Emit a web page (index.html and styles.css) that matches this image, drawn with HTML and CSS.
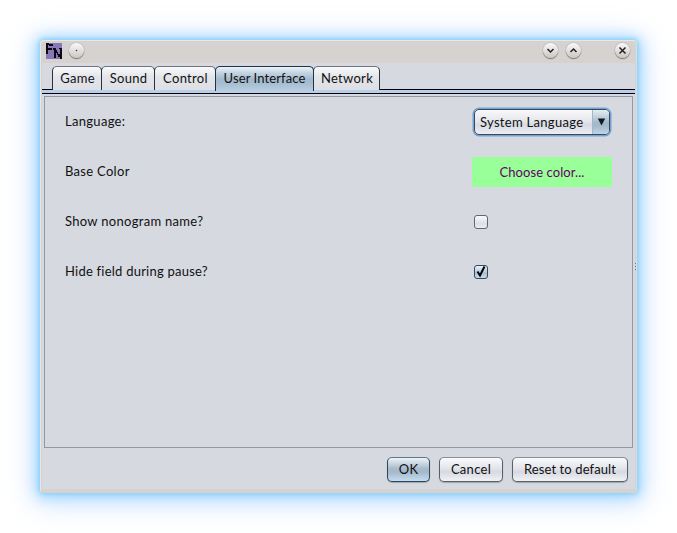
FILE: index.html
```html
<!DOCTYPE html>
<html lang="en">
<head>
<meta charset="utf-8">
<title>Settings</title>
<link rel="stylesheet" href="styles.css">
</head>
<body>
<div class="window">
  <header class="titlebar">
    <svg class="app-icon" width="16" height="16" viewBox="0 0 16 16" shape-rendering="crispEdges">
      <rect width="16" height="16" fill="#8878b8"/>
      <path fill="#0c0814" d="M0 0h2v11H0zM2 0h1v2h-1zM3 1h4v2H3zM2 5h4v2H2zM7 5h3v2H7zM8 7h2v8H8zM10 7h1v3h-1zM11 9h1v3h-1zM12 11h2v3h-2zM13 5h3v1h-3zM14 6h2v10h-2z"/>
    </svg>
    <span class="round sticky"><svg width="15" height="15" viewBox="0 0 15 15"><circle cx="7.5" cy="7.5" r=".8" fill="#333"/></svg></span>
    <span class="round"><svg width="15" height="15" viewBox="0 0 15 15"><path d="M4.5 6l3 3 3-3"/></svg></span>
    <span class="round"><svg width="15" height="15" viewBox="0 0 15 15"><path d="M4.5 9l3-3 3 3"/></svg></span>
    <span class="round close"><svg width="15" height="15" viewBox="0 0 15 15"><path d="M4.5 4.5l6 6M10.5 4.5l-6 6"/></svg></span>
  </header>
  <main class="client">
    <nav class="tabs">
      <span class="tab game">Game</span><span class="tab sound">Sound</span><span class="tab control">Control</span><span class="tab ui active">User Interface</span><span class="tab network">Network</span>
    </nav>
    <div class="tabline"></div>
    <section class="panel">
      <div class="row"><span class="label">Language:</span>
        <span class="combo"><span class="value">System Language</span><span class="arrow"><svg width="9" height="8" viewBox="0 0 9 8"><path d="M.8.5h7.4l-3.7 7z" fill="#15181c"/></svg></span></span></div>
      <div class="row"><span class="label">Base Color</span><span class="color">Choose color...</span></div>
      <div class="row"><span class="label">Show nonogram name?</span><span class="check"></span></div>
      <div class="row"><span class="label long">Hide field during pause?</span><span class="check on"><svg width="14" height="14" viewBox="0 0 14 14"><path d="M3.5 6.5l2.5 4 4.5-9" fill="none" stroke="#000" stroke-width="2"/></svg></span></div>
    </section>
    <footer class="buttons"><span class="btn ok">OK</span><span class="btn cancel">Cancel</span><span class="btn reset">Reset to default</span></footer>
    <span class="grip"><i></i><i></i><i></i></span>
  </main>
</div>
</body>
</html>
```
FILE: styles.css
```css
* { box-sizing: border-box; }
body {
  margin: 0;
  padding: 40px;
  background: #fff;
  font: 13px/18px Lato, "Open Sans", sans-serif;
  letter-spacing: .3px;
  color: #111;
  white-space: nowrap;
}
.window {
  width: 597px;
  height: 453px;
  padding: 0 2px 4px;
  background: #d6d2cf;
  border-radius: 4px;
  box-shadow: inset 1px 1px 0 #e9e7e5, inset -1px 0 0 #dedbd8, 0 0 4px 1px #84d0fa, 0 1px 13px 4px rgba(120, 200, 255, .6), 0 4px 28px 7px rgba(130, 185, 255, .36);
}
.titlebar {
  height: 23px;
  display: flex;
  align-items: flex-start;
  padding: 3px 5px 0 4px;
}
.app-icon { display: block; }
.round {
  width: 15px;
  height: 15px;
  margin-right: 8px;
  border-radius: 50%;
  background: linear-gradient(#fbfaf9, #c9c6c3);
  box-shadow: 0 1px 1px #77736f, 0 0 1px #77736f;
}
.round svg { display: block; fill: none; stroke: #222; stroke-width: 1.5; }
.round circle { stroke: none; }
.sticky { margin-left: 7px; margin-right: auto; }
.close { margin: 0 0 0 26px; }
.client {
  position: relative;
  height: 426px;
  background: #d6d9e0;
}
.tabs { height: 26px; display: flex; padding: 3px 0 0 10px; }
.tab {
  height: 24px;
  margin-right: -1px;
  padding: 2px 0 0 1px;
  text-align: center;
  border: 1px solid #2c3038;
  border-top-color: #70747c;
  border-bottom: 0;
  border-radius: 5px 5px 0 0;
  background: linear-gradient(#fafafb, #e4e6ea 40%, #dcdfe5);
}
.game { width: 50px; }
.sound { width: 54px; }
.control { width: 62px; }
.ui { width: 99px; padding-left: 0; letter-spacing: .1px; }
.network { width: 67px; }
.active {
  position: relative;
  height: 25px;
  border-color: #1c3348;
  background: linear-gradient(#eef4f9, #c3d3e0 25%, #a4bacd 50%, #a5bbce 65%, #b8cfe3);
}
.tabline {
  height: 5px;
  border: solid #000010;
  border-width: 1px 0;
  background: #b8cfe5;
}
.panel {
  width: 589px;
  height: 352px;
  margin: 2px 0 0 2px;
  border: 1px solid #9297a1;
  padding-left: 20px;
}
.row { height: 50px; display: flex; align-items: center; }
.label { width: 409px; padding-bottom: 2px; }
.long { letter-spacing: .23px; }
.combo {
  display: flex;
  width: 136px;
  height: 26px;
  border: 1px solid #38495d;
  border-radius: 5px;
  background: linear-gradient(#f9f9fb, #e3e5ea 50%, #d7dae1 60%, #eceef2);
  box-shadow: 0 0 0 1.5px #73a4d1;
}
.value { flex: 1; padding: 3px 0 0 5px; }
.arrow {
  width: 17px;
  display: flex;
  align-items: center;
  justify-content: center;
  border-left: 1px solid #a3b7c9;
  border-radius: 0 4px 4px 0;
  background: linear-gradient(#e5edf4, #a5bbcd 50%, #a3b8ca 65%, #bfd4e7);
}
.color {
  width: 140px;
  height: 30px;
  margin-left: -2px;
  line-height: 30px;
  text-align: center;
  letter-spacing: .08px;
  background: #99ff99;
  color: #660066;
}
.check {
  width: 14px;
  height: 14px;
  border: 1px solid #62666f;
  border-radius: 3px;
  background: linear-gradient(#fafafb, #dcdfe5 65%, #eceef2);
}
.on { border-color: #2f4a62; background: linear-gradient(#eef4f9, #abc0d1 60%, #c5daec); }
.check svg { display: block; margin: -1px; }
.buttons { display: flex; justify-content: flex-end; gap: 9px; padding: 9px 7px 0 0; }
.btn {
  height: 25px;
  padding-top: 2px;
  text-align: center;
  border: 1px solid #5b5f68;
  border-top-color: #8b8f98;
  border-radius: 5px;
  box-shadow: 0 1px 1px #a2a6ae;
  background: linear-gradient(#fafafc, #e3e5ea 45%, #d6d9e1 60%, #f0f2f5);
}
.ok {
  width: 43px;
  border-color: #2f4559;
  border-top-color: #60788d;
  background: linear-gradient(#eef3f7, #a9bdce 45%, #a3b8ca 60%, #c5dcf0);
}
.cancel { width: 64px; }
.reset { width: 116px; letter-spacing: .1px; }
.grip { position: absolute; right: -1px; top: 200px; }
.grip i { display: block; width: 1px; height: 1px; margin-bottom: 2px; background: #777; }
```
